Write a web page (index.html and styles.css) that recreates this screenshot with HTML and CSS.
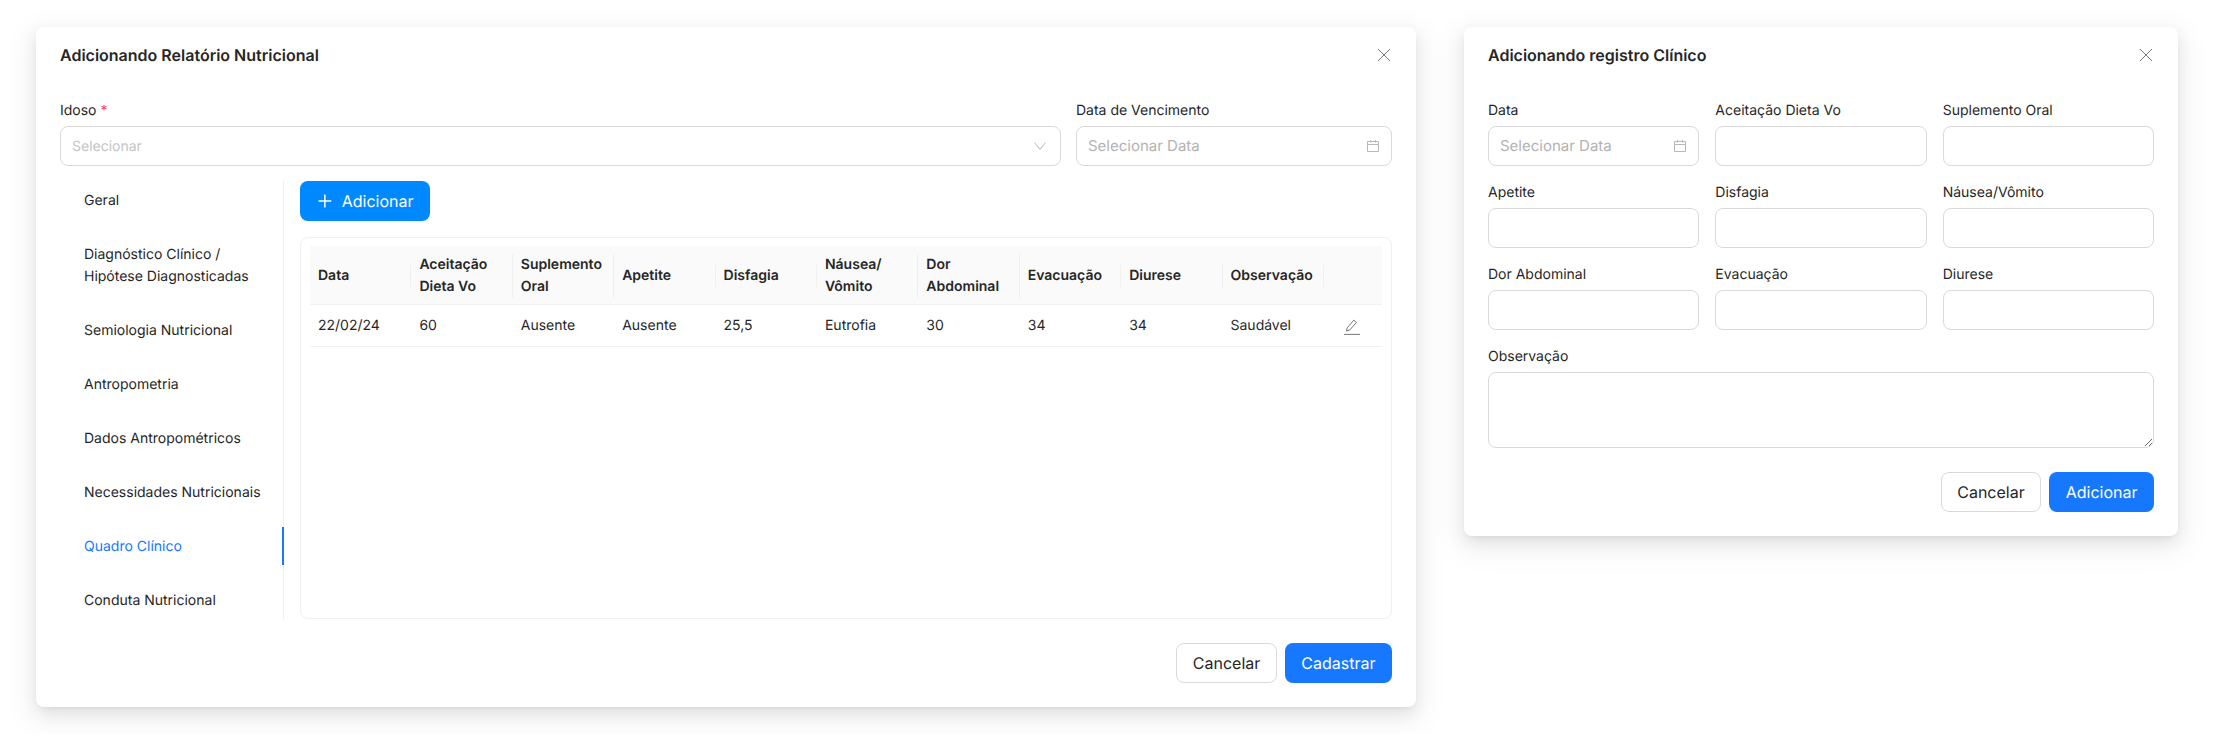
FILE: index.html
```html
<!DOCTYPE html>
<html lang="en">
<head>
    <meta charset="UTF-8">
    <meta name="viewport" content="width=device-width, initial-scale=1.0">
    <title>Relatório Nutricional</title>
    <link rel="stylesheet" href="styles.css">
</head>
<body>
    <section class="modal modal-report">
        <header class="modal-header">
            <h2>Adicionando Relatório Nutricional</h2>
            <button class="close-btn" aria-label="Fechar">
                <svg width="14" height="14" viewBox="0 0 14 14"><path d="M1 1l12 12M13 1L1 13"/></svg>
            </button>
        </header>

        <div class="report-fields">
            <div class="field">
                <label>Idoso <span class="required">*</span></label>
                <div class="control">
                    <span class="placeholder small">Selecionar</span>
                    <svg class="icon chevron" width="14" height="10" viewBox="0 0 14 10"><path d="M1.5 1.5L7 8.5l5.5-7"/></svg>
                </div>
            </div>
            <div class="field">
                <label>Data de Vencimento</label>
                <div class="control">
                    <span class="placeholder">Selecionar Data</span>
                    <svg class="icon" width="14" height="14" viewBox="0 0 14 14"><path d="M1.5 2.5h11v10h-11zM1.5 5.5h11M4.5 1v2.5M9.5 1v2.5"/></svg>
                </div>
            </div>
        </div>

        <div class="tabs">
            <nav class="tab-list">
                <a class="tab">Geral</a>
                <a class="tab">Diagnóstico Clínico / Hipótese Diagnosticadas</a>
                <a class="tab">Semiologia Nutricional</a>
                <a class="tab">Antropometria</a>
                <a class="tab">Dados Antropométricos</a>
                <a class="tab">Necessidades Nutricionais</a>
                <a class="tab active">Quadro Clínico</a>
                <a class="tab">Conduta Nutricional</a>
            </nav>
            <div class="tab-content">
                <button class="btn btn-add">
                    <svg width="16" height="16" viewBox="0 0 16 16"><path d="M8 1.5v13M1.5 8h13"/></svg>
                    Adicionar
                </button>
                <div class="table-card">
                    <table>
                        <thead>
                            <tr>
                                <th><div>Data</div></th>
                                <th><div>Aceitação Dieta Vo</div></th>
                                <th><div>Suplemento Oral</div></th>
                                <th><div>Apetite</div></th>
                                <th><div>Disfagia</div></th>
                                <th><div>Náusea/ Vômito</div></th>
                                <th><div>Dor Abdominal</div></th>
                                <th><div>Evacuação</div></th>
                                <th><div>Diurese</div></th>
                                <th><div>Observação</div></th>
                                <th class="col-actions"></th>
                            </tr>
                        </thead>
                        <tbody>
                            <tr>
                                <td>22/02/24</td>
                                <td>60</td>
                                <td>Ausente</td>
                                <td>Ausente</td>
                                <td>25,5</td>
                                <td>Eutrofia</td>
                                <td>30</td>
                                <td>34</td>
                                <td>34</td>
                                <td>Saudável</td>
                                <td class="col-actions">
                                    <svg class="edit-icon" width="16" height="16" viewBox="0 0 16 16"><path d="M2.5 12l.7-3.2L9.8 1.2l2.6 2.2-6.6 7.6zM0 15.4h16"/></svg>
                                </td>
                            </tr>
                        </tbody>
                    </table>
                </div>
            </div>
        </div>

        <footer class="modal-footer">
            <button class="btn btn-default">Cancelar</button>
            <button class="btn btn-primary">Cadastrar</button>
        </footer>
    </section>

    <section class="modal modal-record">
        <header class="modal-header">
            <h2>Adicionando registro Clínico</h2>
            <button class="close-btn" aria-label="Fechar">
                <svg width="14" height="14" viewBox="0 0 14 14"><path d="M1 1l12 12M13 1L1 13"/></svg>
            </button>
        </header>

        <div class="record-grid">
            <div class="field">
                <label>Data</label>
                <div class="control">
                    <span class="placeholder">Selecionar Data</span>
                    <svg class="icon" width="14" height="14" viewBox="0 0 14 14"><path d="M1.5 2.5h11v10h-11zM1.5 5.5h11M4.5 1v2.5M9.5 1v2.5"/></svg>
                </div>
            </div>
            <div class="field"><label>Aceitação Dieta Vo</label><input type="text"></div>
            <div class="field"><label>Suplemento Oral</label><input type="text"></div>
            <div class="field"><label>Apetite</label><input type="text"></div>
            <div class="field"><label>Disfagia</label><input type="text"></div>
            <div class="field"><label>Náusea/Vômito</label><input type="text"></div>
            <div class="field"><label>Dor Abdominal</label><input type="text"></div>
            <div class="field"><label>Evacuação</label><input type="text"></div>
            <div class="field"><label>Diurese</label><input type="text"></div>
            <div class="field field-wide"><label>Observação</label><textarea></textarea></div>
        </div>

        <footer class="modal-footer">
            <button class="btn btn-default">Cancelar</button>
            <button class="btn btn-primary">Adicionar</button>
        </footer>
    </section>
</body>
</html>
```

FILE: styles.css
```css
* {
    box-sizing: border-box;
}

body {
    margin: 0;
    padding: 27px 36px;
    display: flex;
    align-items: flex-start;
    gap: 48px;
    background-color: #fff;
    color: #262626;
    font-family: 'Inter', sans-serif;
    font-size: 14px;
    line-height: 22px;
    text-rendering: geometricPrecision;
}

.modal {
    flex: none;
    padding: 16px 24px 24px;
    background-color: #fff;
    border-radius: 8px;
    box-shadow: 0 6px 16px rgba(0, 0, 0, 0.08), 0 3px 6px -4px rgba(0, 0, 0, 0.12), 0 9px 28px 8px rgba(0, 0, 0, 0.05);
}

.modal-report {
    width: 1380px;
}

.modal-record {
    width: 714px;
}

.modal-header {
    display: flex;
    align-items: center;
    justify-content: space-between;
    height: 24px;
    margin-bottom: 33px;
}

.modal-header h2 {
    margin: 0;
    font-size: 16px;
    font-weight: 600;
    line-height: 24px;
}

.close-btn {
    display: flex;
    margin-right: 1px;
    padding: 0;
    border: none;
    background: none;
}

svg path {
    fill: none;
    stroke: currentColor;
    stroke-width: 1;
}

.close-btn svg {
    color: #7a7a7a;
}

.report-fields {
    display: grid;
    grid-template-columns: 1001px 316px;
    gap: 15px;
    margin-bottom: 15px;
}

.field label {
    display: block;
    height: 20px;
    margin-top: 1px;
    margin-bottom: 5px;
    line-height: 20px;
}

.required {
    color: #ff4d4f;
}

.control,
.field input,
.field textarea {
    width: 100%;
    height: 40px;
    border: 1px solid #d9d9d9;
    border-radius: 8px;
    background-color: #fff;
}

.control {
    display: flex;
    align-items: center;
    justify-content: space-between;
    padding: 0 11px;
}

.placeholder {
    color: #b3b3b3;
    font-size: 15px;
}

.placeholder.small {
    margin-top: 1px;
    color: #c4c4c4;
    font-size: 14px;
}

.icon {
    flex: none;
    color: #b8b8b8;
}

.chevron {
    margin-right: 2px;
}

.tabs {
    display: flex;
    gap: 16px;
    height: 438px;
}

.tab-list {
    flex: none;
    display: flex;
    flex-direction: column;
    gap: 16px;
    width: 224px;
    border-right: 1px solid #f0f0f0;
}

.tab {
    padding: 9px 16px 7px 24px;
}

.tab.active {
    margin-right: -1px;
    border-right: 2px solid #1677ff;
    color: #1677ff;
}

.tab-content {
    flex: 1;
    display: flex;
    flex-direction: column;
    align-items: flex-start;
    gap: 16px;
}

.btn {
    display: inline-flex;
    align-items: center;
    height: 40px;
    padding: 0 15.5px;
    border: 1px solid transparent;
    border-radius: 8px;
    font-family: inherit;
    font-size: 16px;
    line-height: 24px;
    text-rendering: geometricPrecision;
}

.btn-add {
    gap: 9px;
    width: 130px;
    padding-left: 16px;
    background-color: #0088ff;
    color: #fff;
}

.btn-add svg path {
    stroke-width: 1.5;
}

.btn-default {
    background-color: #fff;
    border-color: #d9d9d9;
    color: #262626;
}

.btn-primary {
    background-color: #1677ff;
    color: #fff;
}

.table-card {
    flex: 1;
    width: 100%;
    padding: 8px 9px;
    border: 1px solid #f0f0f0;
    border-radius: 8px;
}

table {
    width: 100%;
    border-collapse: separate;
    border-spacing: 0;
    table-layout: fixed;
}

th {
    width: 101.4px;
    padding: 8px 0 6px 8px;
    background-color: #fafafa;
    border-bottom: 1px solid #f0f0f0;
    font-weight: 600;
    text-align: left;
}

th div {
    padding-right: 8px;
    border-right: 1px solid #f0f0f0;
}

td {
    padding: 10px 8px 9px;
    border-bottom: 1px solid #f0f0f0;
}

th.col-actions {
    width: auto;
}

.edit-icon {
    display: block;
    margin: 2px 0 0 12px;
    color: #777;
}

.modal-footer {
    display: flex;
    justify-content: flex-end;
    gap: 8px;
    margin-top: 24px;
}

.record-grid {
    display: grid;
    grid-template-columns: repeat(3, 1fr);
    gap: 16px;
}

.field-wide {
    grid-column: 1 / -1;
}

.field textarea {
    display: block;
    height: 76px;
}
```
